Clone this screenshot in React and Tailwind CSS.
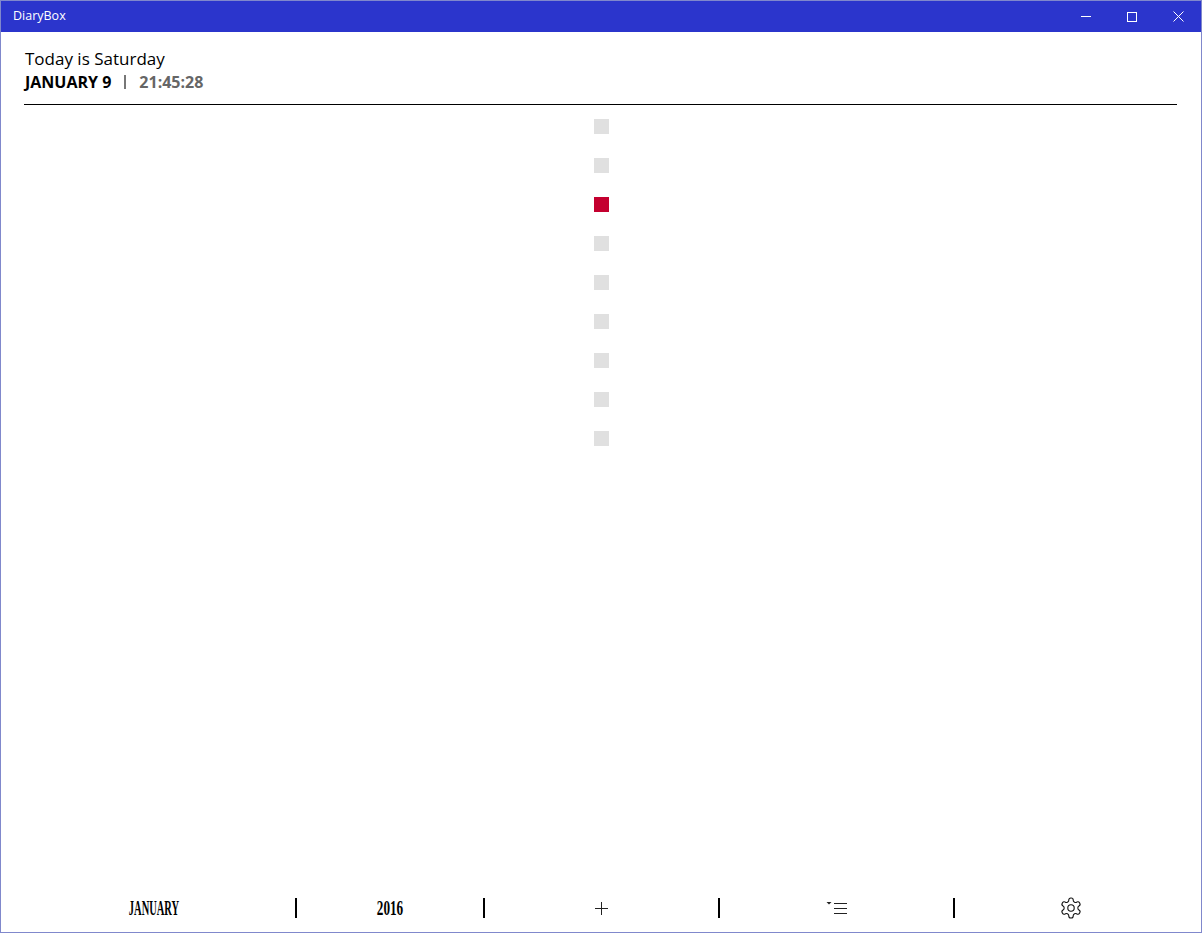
import React from 'react';

const segoe = { fontFamily: '"Open Sans", "Noto Sans", sans-serif' };

const ListIcon = () => (
  <svg width="22" height="14" viewBox="0 0 22 14" fill="none">
    <path d="M0.500 1h5L3 3.500z" fill="#222" />
    <path d="M8 2.500h13M8 7.500h13M8 12.500h13" stroke="#222" strokeWidth="1" />
  </svg>
);

const GearIcon = () => (
  <svg width="24" height="24" viewBox="0 0 24 24" fill="none" stroke="#111" strokeWidth="1.1" strokeLinejoin="round">
    <path d="M12.220 2h-.44a2 2 0 0 0-2 2v.18a2 2 0 0 1-1 1.730l-.43.250a2 2 0 0 1-2 0l-.15-.08a2 2 0 0 0-2.730.730l-.22.380a2 2 0 0 0 .730 2.730l.15.100a2 2 0 0 1 1 1.720v.510a2 2 0 0 1-1 1.740l-.15.090a2 2 0 0 0-.730 2.730l.22.380a2 2 0 0 0 2.730.730l.15-.08a2 2 0 0 1 2 0l.43.250a2 2 0 0 1 1 1.730V20a2 2 0 0 0 2 2h.44a2 2 0 0 0 2-2v-.18a2 2 0 0 1 1-1.730l.43-.250a2 2 0 0 1 2 0l.15.08a2 2 0 0 0 2.730-.730l.22-.390a2 2 0 0 0-.730-2.730l-.15-.08a2 2 0 0 1-1-1.740v-.500a2 2 0 0 1 1-1.740l.15-.090a2 2 0 0 0 .730-2.730l-.22-.380a2 2 0 0 0-2.730-.730l-.15.08a2 2 0 0 1-2 0l-.43-.250a2 2 0 0 1-1-1.730V4a2 2 0 0 0-2-2z" />
    <circle cx="12" cy="12" r="3.200" />
  </svg>
);

const Divider = () => <div className="h-5 w-0.5 shrink-0 bg-black" />;

export default function App() {
  const slots = [0, 1, 2, 3, 4, 5, 6, 7, 8];

  return (
    <div className="flex h-[933px] w-[1202px] flex-col overflow-hidden border border-[#8088cc] bg-white" style={segoe}>
      {/* title bar */}
      <div className="flex h-[31px] shrink-0 items-center justify-between bg-[#2b35cc] text-white">
        <span className="pl-3 text-[12.500px]">DiaryBox</span>
        <div className="flex items-center">
          <div className="flex h-8 w-[46px] items-center justify-center">
            <div className="h-px w-2.5 bg-white" />
          </div>
          <div className="flex h-8 w-[46px] items-center justify-center">
            <div className="h-2.5 w-2.5 border border-white" />
          </div>
          <div className="flex h-8 w-[46px] items-center justify-center">
            <svg width="11" height="11" viewBox="0 0 11 11" stroke="white" strokeWidth="1">
              <path d="M0.500 0.500l10 10M10.500 0.500l-10 10" />
            </svg>
          </div>
        </div>
      </div>

      {/* header */}
      <div className="ml-[23px] mr-[24px] shrink-0 border-b border-black pb-[11px] pl-px pt-[15px]">
        <div className="text-[17px] leading-6 text-black">Today is Saturday</div>
        <div className="flex h-[22px] items-center text-base font-bold leading-[22px]">
          <span className="text-black">JANUARY 9</span>
          <div className="ml-[13px] mr-[13px] h-3.5 w-0.5 bg-[#777]" />
          <span className="text-[#666]">21:45:28</span>
        </div>
      </div>

      {/* day markers */}
      <div className="flex flex-1 flex-col items-center gap-6 pt-[14px]">
        {slots.map((i) => (
          <div key={i} className={`h-[15px] w-[15px] ${i === 2 ? 'bg-[#c4002f]' : 'bg-[#e0e0e0]'}`} />
        ))}
      </div>

      {/* bottom bar */}
      <div className="flex h-[46px] shrink-0 items-center pb-0.5 text-black">
        <div className="flex w-[294px] justify-center pl-[12px]">
          <span className="inline-block scale-x-[0.525] text-xl font-bold" style={{ fontFamily: '"Liberation Serif", serif' }}>JANUARY</span>
        </div>
        <Divider />
        <div className="flex w-[185px] justify-center">
          <span className="inline-block scale-x-[0.66] text-xl font-bold" style={{ fontFamily: '"Liberation Serif", serif' }}>2016</span>
        </div>
        <div className="ml-px">
          <Divider />
        </div>
        <div className="flex w-[232px] justify-center">
          <svg width="13" height="13" viewBox="0 0 13 13" stroke="#222" strokeWidth="1">
            <path d="M0 6.500h13M6.500 0v13" />
          </svg>
        </div>
        <div className="ml-px">
          <Divider />
        </div>
        <div className="flex w-[233px] justify-center">
          <ListIcon />
        </div>
        <Divider />
        <div className="flex w-[231px] justify-center">
          <GearIcon />
        </div>
      </div>
    </div>
  );
}
